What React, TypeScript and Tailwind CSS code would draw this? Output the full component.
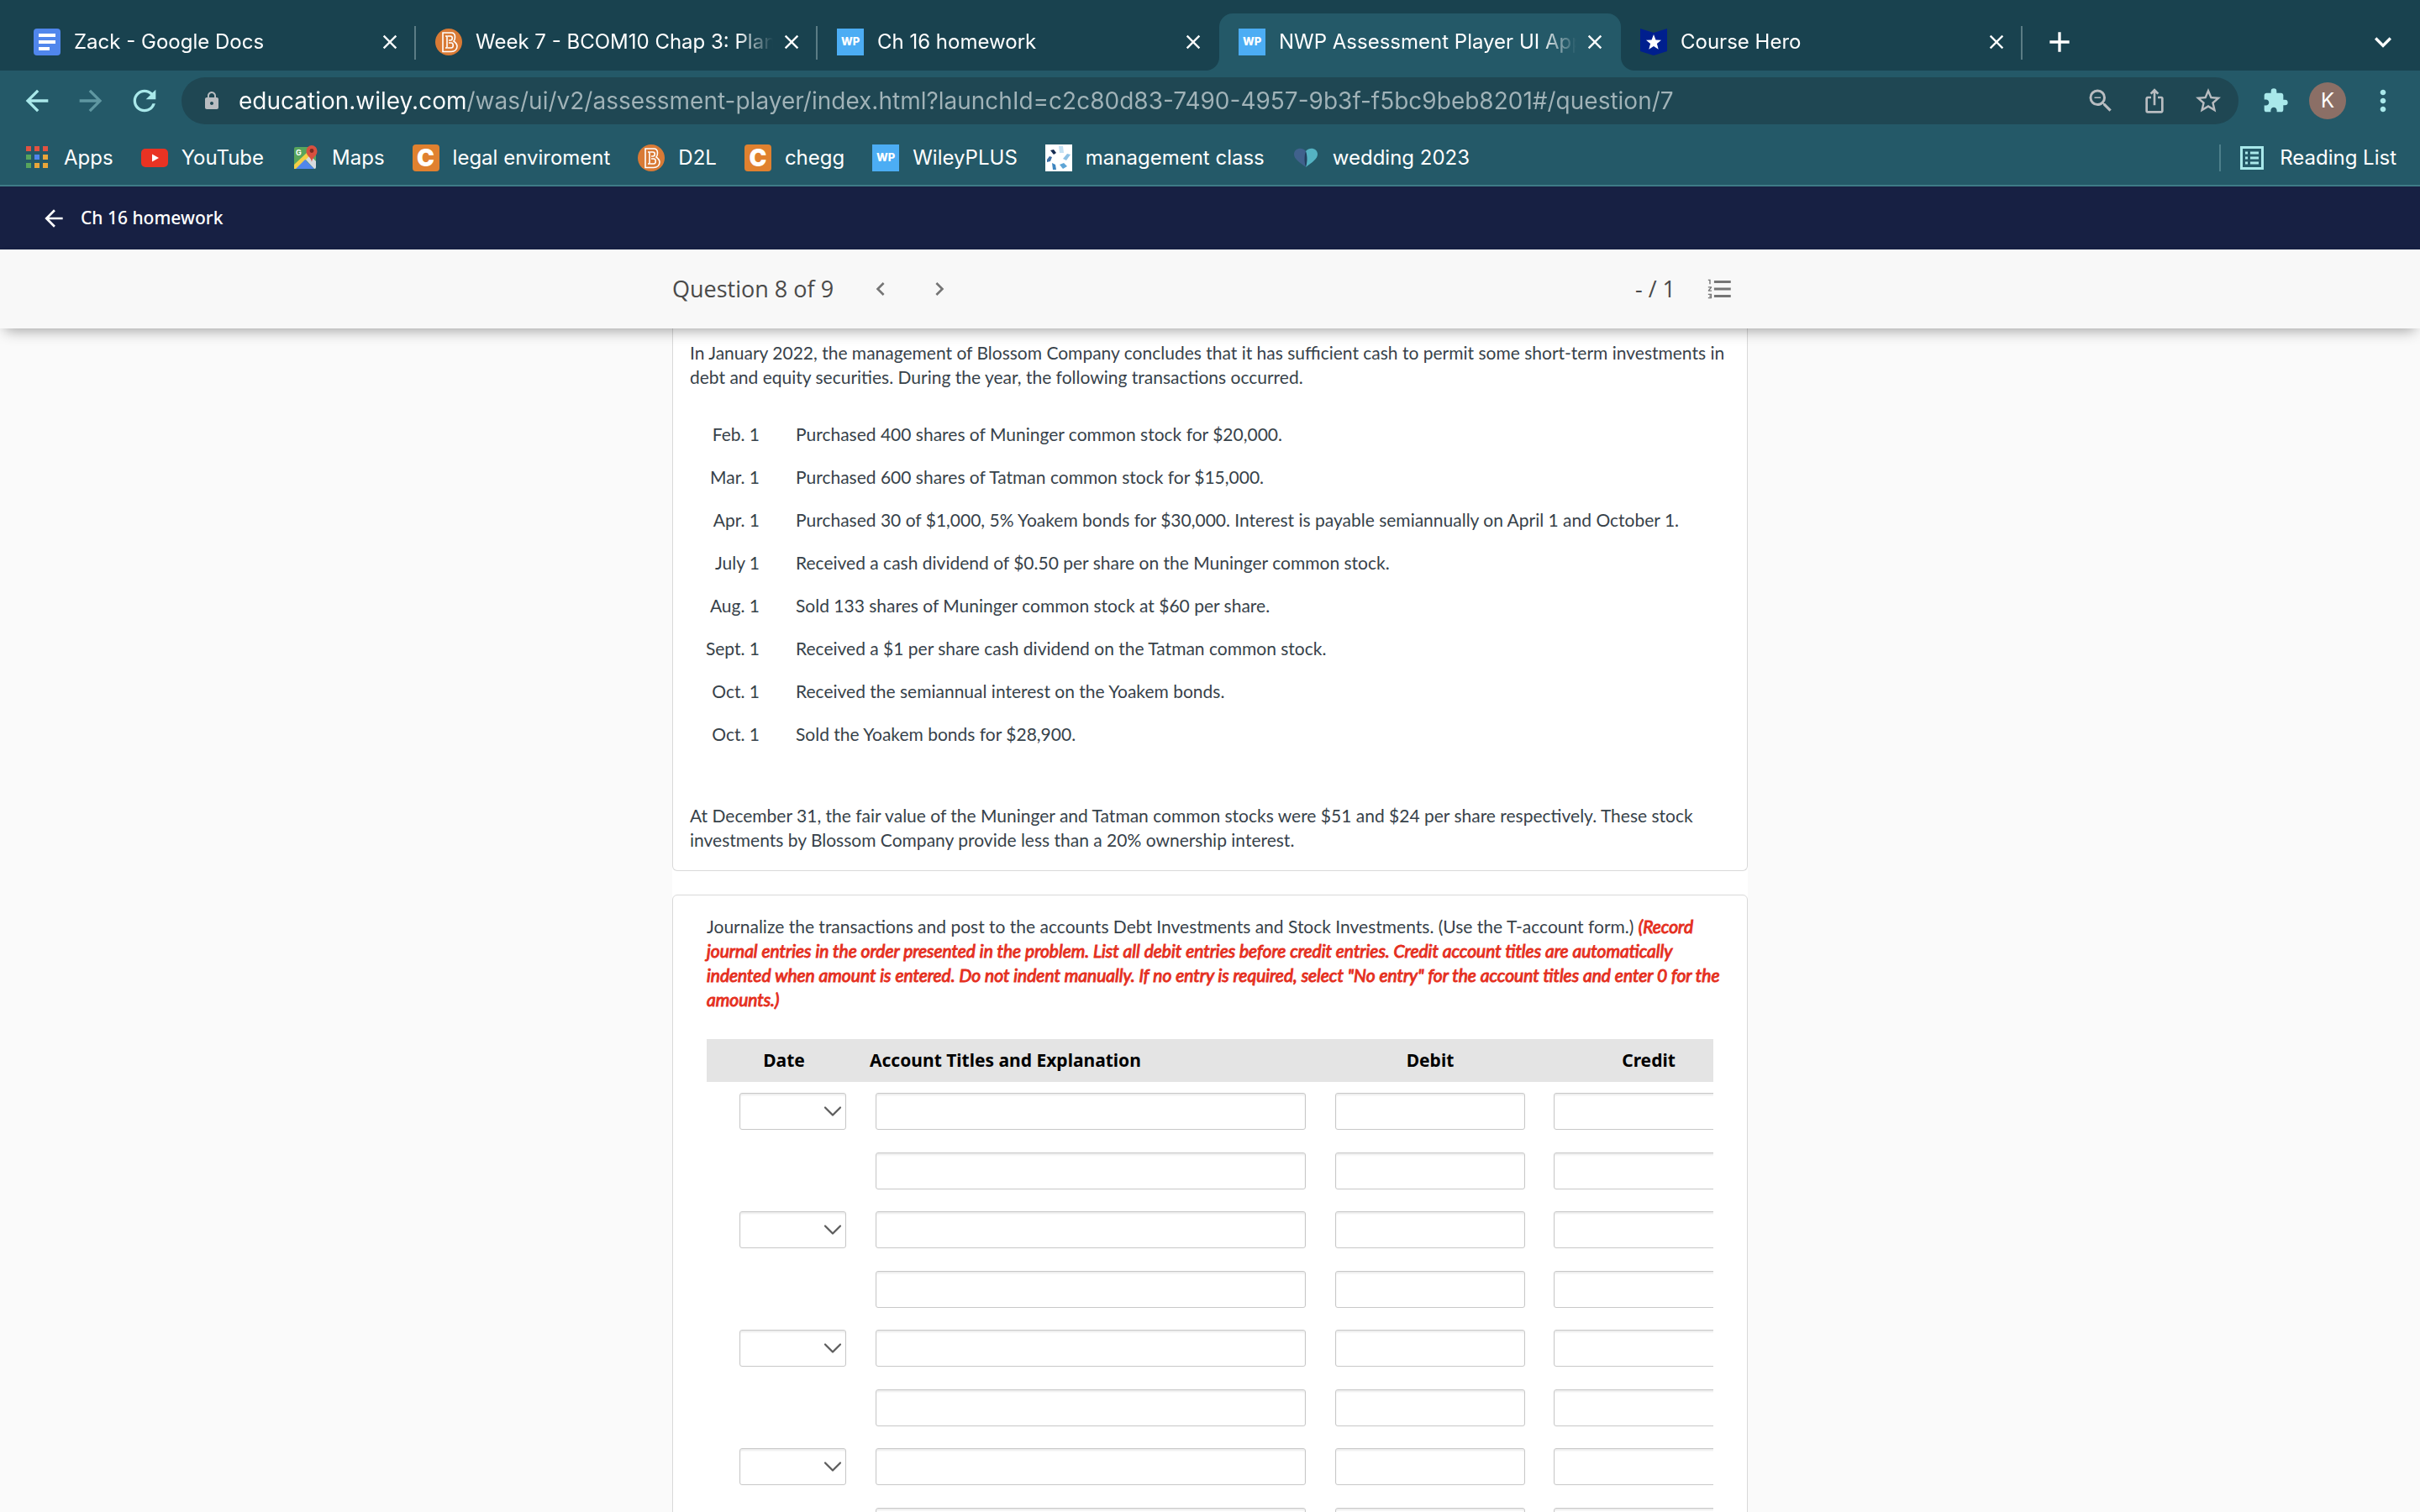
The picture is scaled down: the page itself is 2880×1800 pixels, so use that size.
import type { ReactNode } from "react";
import { ChevronDown } from "lucide-react";
import {
  MdAdd,
  MdArrowBack,
  MdArrowForward,
  MdChevronLeft,
  MdChevronRight,
  MdClose,
  MdExpandMore,
  MdExtension,
  MdFormatListNumbered,
  MdIosShare,
  MdLock,
  MdMoreVert,
  MdRefresh,
  MdStarBorder,
  MdZoomOut,
} from "react-icons/md";

function DocsIcon() {
  return (
    <svg viewBox="0 0 32 32" className="size-8 shrink-0">
      <rect width="32" height="32" rx="4" fill="#5086ec" />
      <path d="M6 8h20M6 16h20M6 24h13" stroke="#fff" strokeWidth="4" />
    </svg>
  );
}

function BIcon() {
  return (
    <svg viewBox="0 0 32 32" className="size-8 shrink-0">
      <circle cx="16" cy="16" r="16" fill="#d97a35" />
      <path
        d="M9 5h10c3 0 4.500 2 4.500 5c0 2.500-.5 4-1.500 5c2 1.500 4 3.500 4 6c0 4-3 6.500-7 6.500H9zM12 9h2v14h-2M15 9h3c3 0 3 5 0 5h-2M16 17h3c3 0 3 6 0 6h-4"
        fill="none"
        stroke="#fff"
        strokeWidth="1.6"
      />
    </svg>
  );
}

function WpIcon() {
  return (
    <span className="flex size-8 shrink-0 items-center justify-center bg-[#4cadf4] text-[13px] font-extrabold text-white">
      WP
    </span>
  );
}

function HeroIcon() {
  return (
    <svg viewBox="0 0 32 32" className="size-8 shrink-0">
      <path d="M0 0l16 5l16-5v27l-16 5l-16-5z" fill="#001f8e" />
      <path d="M16 7l2.500 6.500l6.500 .3l-5.100 4.200l1.800 6.700l-5.700-3.800l-5.700 3.800l1.800-6.700l-5.100-4.200l6.500-.3z" fill="#fff" />
    </svg>
  );
}

function AppsIcon() {
  const colors = ["#e25241", "#e25241", "#e25241", "#58a55c", "#4f86ec", "#e9a63a", "#58a55c", "#e9a63a", "#e9a63a"];
  return (
    <svg viewBox="0 0 32 32" className="size-8 shrink-0">
      {colors.map((c, i) => (
        <rect key={i} x={3 + (i % 3) * 10} y={2 + Math.floor(i / 3) * 10} width="6" height="6" fill={c} />
      ))}
    </svg>
  );
}

function YouTubeIcon() {
  return (
    <svg viewBox="0 0 32 32" className="size-8 shrink-0">
      <rect y="5" width="32" height="22" rx="5" fill="#e93323" />
      <path d="M13 11.500v9l8-4.500z" fill="#fff" />
    </svg>
  );
}

function MapsIcon() {
  return (
    <svg viewBox="0 0 32 32" className="size-8 shrink-0">
      <rect x="3" y="3" width="26" height="26" rx="2" fill="#58a55c" />
      <path d="M16 17L21 12L29 20V27a2 2 0 0 1-2 2z" fill="#d9dbde" />
      <path d="M3 24L19 9l3 4L6 29H3z" fill="#f5cf45" />
      <path d="M5 29L16 18L27 29z" fill="#5086ec" />
      <text x="5" y="13" fill="#fff" fontSize="9" fontWeight="700">
        G
      </text>
      <path d="M24 21c-.5-6-6.500-7-6.500-13a6.500 7 0 0 1 13 0c0 6-6 7-6.500 13z" fill="#d8503f" />
      <circle cx="24" cy="7.500" r="2.400" fill="#7c2b22" />
    </svg>
  );
}

function CheggIcon() {
  return (
    <span className="flex size-8 shrink-0 items-center justify-center rounded bg-[#e0812f] text-[28px] leading-none font-black text-white">
      C
    </span>
  );
}

function ManagementIcon() {
  return (
    <svg viewBox="0 0 32 32" className="size-8 shrink-0">
      <rect width="32" height="32" fill="#fff" />
      <path d="M16 2h5l1 8h-5z" fill="#c2e0f3" />
      <path d="M6 7l4-1l3 4l-3 2z" fill="#152c52" />
      <path d="M2 18l3-4l3 1l-2 5l-4 1z" fill="#3d6fa5" />
      <path d="M21 17l5-6l4 1l-5 7z" fill="#8cc0e4" />
      <path d="M8 22l4 2l1 6l-4 0z" fill="#3f86c0" />
      <path d="M17 24l5-2l4 4l-5 3z" fill="#5ea5d6" />
    </svg>
  );
}

function HeartIcon() {
  return (
    <svg viewBox="0 0 32 32" className="size-8 shrink-0">
      <path d="M16 27C8 21 2 17 2 11.500C2 5 11 2 16 8z" fill="#40618c" />
      <path d="M16 27C24 21 30 17 30 11.500C30 5 21 2 16 8z" fill="#55b3c3" />
      <path d="M16 8c2 5 2 13 0 19c-2-6-2-14 0-19z" fill="#23405f" />
    </svg>
  );
}

function ReadingListIcon() {
  return (
    <svg viewBox="0 0 28 28" className="size-7 shrink-0">
      <rect x="1.500" y="1.500" width="25" height="25" fill="none" stroke="#a9e8ea" strokeWidth="3" />
      <path d="M6 8h3M12 8h10M6 14h3M12 14h10M6 20h3M12 20h10" stroke="#a9e8ea" strokeWidth="3" />
    </svg>
  );
}

const tabs = [
  { title: "Zack - Google Docs", icon: <DocsIcon />, divider: true },
  { title: "Week 7 - BCOM10 Chap 3: Plan", icon: <BIcon />, divider: true },
  { title: "Ch 16 homework", icon: <WpIcon />, divider: false },
  { title: "NWP Assessment Player UI App", icon: <WpIcon />, active: true, divider: false },
  { title: "Course Hero", icon: <HeroIcon />, divider: true },
];

const bookmarks = [
  { label: "Apps", icon: <AppsIcon /> },
  { label: "YouTube", icon: <YouTubeIcon /> },
  { label: "Maps", icon: <MapsIcon /> },
  { label: "legal enviroment", icon: <CheggIcon /> },
  { label: "D2L", icon: <BIcon /> },
  { label: "chegg", icon: <CheggIcon /> },
  { label: "WileyPLUS", icon: <WpIcon /> },
  { label: "management class", icon: <ManagementIcon /> },
  { label: "wedding 2023", icon: <HeartIcon /> },
];

const transactions = [
  ["Feb. 1", "Purchased 400 shares of Muninger common stock for $20,000."],
  ["Mar. 1", "Purchased 600 shares of Tatman common stock for $15,000."],
  ["Apr. 1", "Purchased 30 of $1,000, 5% Yoakem bonds for $30,000. Interest is payable semiannually on April 1 and October 1."],
  ["July 1", "Received a cash dividend of $0.50 per share on the Muninger common stock."],
  ["Aug. 1", "Sold 133 shares of Muninger common stock at $60 per share."],
  ["Sept. 1", "Received a $1 per share cash dividend on the Tatman common stock."],
  ["Oct. 1", "Received the semiannual interest on the Yoakem bonds."],
  ["Oct. 1", "Sold the Yoakem bonds for $28,900."],
];

function Tab({ title, icon, active, divider }: { title: string; icon: ReactNode; active?: boolean; divider: boolean }) {
  return (
    <div
      className={`relative flex h-[68px] w-[478px] items-center pr-[17px] pl-[23px] ${active ? "rounded-t-2xl bg-[#245968]" : ""}`}
    >
      {active && (
        <>
          <span className="absolute bottom-0 -left-4 size-4 bg-[#245968]">
            <span className="block size-4 rounded-br-2xl bg-[#19424f]" />
          </span>
          <span className="absolute -right-4 bottom-0 size-4 bg-[#245968]">
            <span className="block size-4 rounded-bl-2xl bg-[#19424f]" />
          </span>
        </>
      )}
      {icon}
      <a
        href="#"
        className="ml-4 flex-1 overflow-hidden [mask-image:linear-gradient(to_right,black_88%,transparent)] text-2xl whitespace-nowrap text-white"
      >
        {title}
      </a>
      <button aria-label={`Close ${title}`} className="ml-2 text-white">
        <MdClose className="size-7" />
      </button>
      {divider && <span className="absolute top-[15px] right-0 h-10 w-0.5 bg-[#5b7c85]" />}
    </div>
  );
}

function Browser() {
  return (
    <div className="bg-[#19424f] font-['Inter',sans-serif]">
      <div className="flex h-[84px] items-end pr-6 pl-[17px]">
        {tabs.map((t) => (
          <Tab key={t.title} {...t} />
        ))}
        <div className="flex h-[68px] flex-1 items-center justify-between pl-6 text-white">
          <button aria-label="New tab">
            <MdAdd className="size-10" />
          </button>
          <button aria-label="Search tabs">
            <MdExpandMore className="size-10" />
          </button>
        </div>
      </div>

      <div className="border-b-2 border-[#3f7b87] bg-[#245968]">
        <div className="flex h-[72px] items-center pr-6 pl-6 text-[#a9e8ea]">
          <button aria-label="Back">
            <MdArrowBack className="size-10" />
          </button>
          <button aria-label="Forward" className="ml-6 text-[#5f97a1]">
            <MdArrowForward className="size-10" />
          </button>
          <button aria-label="Reload" className="ml-6">
            <MdRefresh className="size-10" />
          </button>
          <div className="ml-6 flex h-14 flex-1 items-center gap-[30px] rounded-full bg-[#1f4753] pr-[18px] pl-6 text-[#b9bdc1]">
            <div className="flex min-w-0 flex-1 items-center gap-5">
              <MdLock className="size-6 shrink-0" />
              <input
                aria-label="Address"
                className="min-w-0 flex-1 bg-linear-[to_right,white_270px,#a1b3b8_270px] bg-clip-text text-[28px] text-transparent outline-none"
                defaultValue="education.wiley.com/was/ui/v2/assessment-player/index.html?launchId=c2c80d83-7490-4957-9b3f-f5bc9beb8201#/question/7"
              />
            </div>
            <button aria-label="Zoom out">
              <MdZoomOut className="size-9" />
            </button>
            <button aria-label="Share">
              <MdIosShare className="size-8" />
            </button>
            <button aria-label="Bookmark this tab">
              <MdStarBorder className="size-9" />
            </button>
          </div>
          <button aria-label="Extensions" className="ml-7">
            <MdExtension className="size-8" />
          </button>
          <button className="ml-6 size-11 rounded-full bg-[#8b6f66] text-2xl text-white">K</button>
          <button aria-label="Menu" className="ml-6">
            <MdMoreVert className="size-10" />
          </button>
        </div>

        <div className="flex h-16 items-center justify-between pr-7 pl-7 text-2xl text-white">
          <nav className="flex items-center gap-[33px]">
            {bookmarks.map((b) => (
              <a key={b.label} href="#" className="flex items-center gap-4 whitespace-nowrap">
                {b.icon}
                {b.label}
              </a>
            ))}
          </nav>
          <button className="flex items-center gap-[19px]">
            <span className="mr-1 h-8 w-0.5 bg-[#4d7f8b]" />
            <ReadingListIcon />
            Reading List
          </button>
        </div>
      </div>
    </div>
  );
}

const field =
  "block h-11 rounded-[3px] border border-[#c8c8c8] bg-white px-2 shadow-[inset_0_2px_2px_rgba(0,0,0,0.08)]";

function EntryCells({ name }: { name: string }) {
  return (
    <>
      <td className="pl-[17px]">
        <input aria-label={`Account title ${name}`} className={`${field} w-[512px]`} />
      </td>
      <td>
        <input aria-label={`Debit ${name}`} className={`${field} mx-auto w-[226px]`} />
      </td>
      <td>
        <input aria-label={`Credit ${name}`} className={`${field} mx-auto w-[226px]`} />
      </td>
    </>
  );
}

function JournalTable() {
  return (
    <div className="overflow-hidden">
      <table className="w-[1251px] table-fixed border-collapse">
        <colgroup>
          <col className="w-[184px]" />
          <col className="w-[547px]" />
          <col className="w-[260px]" />
          <col className="w-[260px]" />
        </colgroup>
        <thead>
          <tr className="h-[51px] bg-[#e4e4e4] font-['Noto_Sans',sans-serif] text-[21px] text-black">
            <th>Date</th>
            <th className="pl-[10px] text-left">Account Titles and Explanation</th>
            <th>Debit</th>
            <th>Credit</th>
          </tr>
        </thead>
        {[1, 2, 3, 4, 5].map((n) => (
          <tbody key={n}>
            <tr className="h-[70px]">
              <td className="pl-[39px]">
                <div className="relative w-[127px]">
                  <select aria-label={`Date ${n}`} className={`${field} w-full appearance-none`}>
                    <option></option>
                  </select>
                  <ChevronDown
                    strokeWidth={1.5}
                    className="pointer-events-none absolute top-1 -right-0.5 size-9 text-[#5c5c5c]"
                  />
                </div>
              </td>
              <EntryCells name={`${n}a`} />
            </tr>
            <tr className="h-[71px]">
              <td />
              <EntryCells name={`${n}b`} />
            </tr>
          </tbody>
        ))}
      </table>
    </div>
  );
}

export default function App() {
  return (
    <div className="flex h-screen flex-col overflow-hidden bg-[#fafafa]">
      <Browser />

      <header className="flex h-[75px] shrink-0 items-center bg-[#172043] px-12 font-['Noto_Sans',sans-serif] text-white">
        <a href="#" className="flex items-center gap-4 text-[21px] font-medium">
          <MdArrowBack className="size-8" />
          Ch 16 homework
        </a>
      </header>

      <div className="relative z-10 h-[94px] shrink-0 bg-[#f8f8f8] font-['Open_Sans',sans-serif] text-[27px] text-[#4a4a4a] shadow-[0_8px_16px_-6px_rgba(0,0,0,0.38)]">
        <div className="mx-auto flex h-full max-w-[1280px] items-center">
          <h1>Question 8 of 9</h1>
          <button aria-label="Previous question" className="ml-10 text-[#757575]">
            <MdChevronLeft className="size-8" />
          </button>
          <button aria-label="Next question" className="ml-[38px] text-[#757575]">
            <MdChevronRight className="size-8" />
          </button>
          <span className="ml-auto">- / 1</span>
          <button aria-label="Question list" className="mr-4 ml-9 text-[#757575]">
            <MdFormatListNumbered className="size-[34px]" />
          </button>
        </div>
      </div>

      <main className="mx-auto w-full max-w-[1280px] flex-1 overflow-hidden bg-white font-['Lato',sans-serif] text-[21px] leading-[29px] text-[#37424a]">
        <section className="rounded-b-md border border-t-0 border-[#d9d9d9] px-5 pt-[14px] pb-[22px]">
          <p>
            In January 2022, the management of Blossom Company concludes that it has sufficient cash to permit some
            short-term investments in debt and equity securities. During the year, the following transactions occurred.
          </p>
          <table className="mt-[28px] mb-[57px]">
            <tbody>
              {transactions.map(([date, text], i) => (
                <tr key={i}>
                  <td className="w-[83px] py-[11px] text-right whitespace-nowrap">{date}</td>
                  <td className="py-[11px] pl-[43px]">{text}</td>
                </tr>
              ))}
            </tbody>
          </table>
          <p>
            At December 31, the fair value of the Muninger and Tatman common stocks were $51 and $24 per share
            respectively. These stock investments by Blossom Company provide less than a 20% ownership interest.
          </p>
        </section>

        <section className="mt-[28px] rounded-t-md border border-[#d9d9d9] px-10 pt-[22px] pb-10">
          <p className="-mr-4 mb-[33px]">
            Journalize the transactions and post to the accounts Debt Investments and Stock Investments. (Use the
            T-account form.){" "}
            <em className="text-[#e5301f] [-webkit-text-stroke:1px_#e5301f]">
              (Record journal entries in the order presented in the problem. List all debit entries before credit
              entries. Credit account titles are automatically indented when amount is entered. Do not indent manually.
              If no entry is required, select "No entry" for the account titles and enter 0 for the amounts.)
            </em>
          </p>
          <JournalTable />
        </section>
      </main>
    </div>
  );
}
